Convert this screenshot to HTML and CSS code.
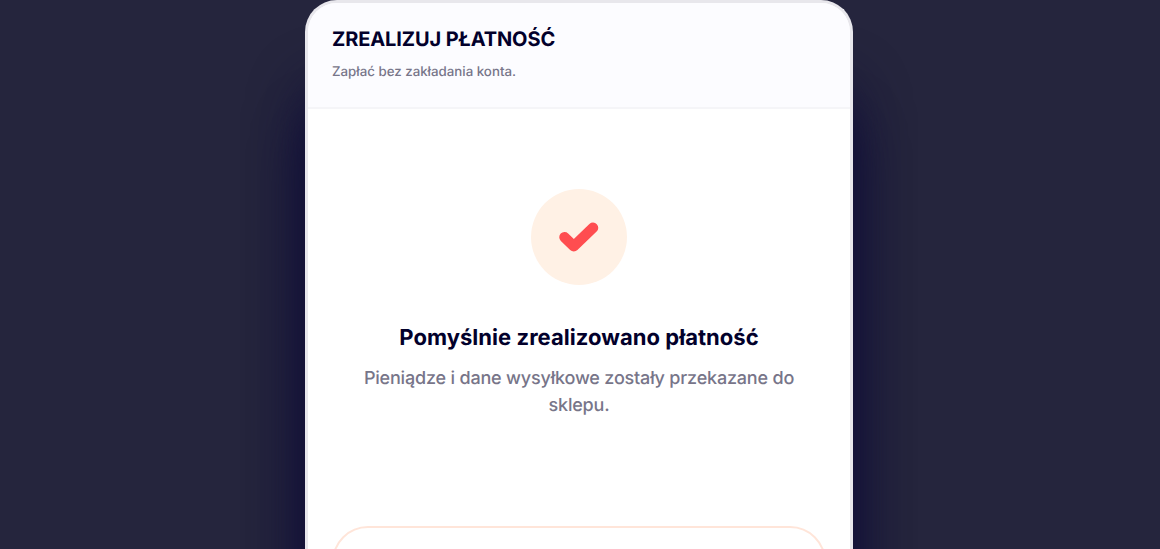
FILE: index.html
```html
<!DOCTYPE html>
<html lang="pl">
<head>
<meta charset="utf-8">
<title>Zrealizuj płatność</title>
<link rel="stylesheet" href="styles.css">
</head>
<body>
<main class="card">
<header class="card-header">
<h1 class="title">ZREALIZUJ PŁATNOŚĆ</h1>
<p class="subtitle">Zapłać bez zakładania konta.</p>
</header>
<section class="status">
<div class="badge">
<svg class="check" viewBox="0 0 40 32" width="40" height="32"><path d="M5.5 16.2 14.8 25.2 34 6.8" fill="none" stroke="#ff4d50" stroke-width="10.5" stroke-linecap="round" stroke-linejoin="round"/></svg>
</div>
<h2 class="status-title">Pomyślnie zrealizowano płatność</h2>
<p class="status-text">Pieniądze i dane wysyłkowe zostały przekazane do sklepu.</p>
</section>
<div class="action"></div>
</main>
</body>
</html>
```
FILE: styles.css
```css
* { box-sizing: border-box; margin: 0; padding: 0; }
html { overflow: hidden; }
body { background: #25253d; font-family: Inter, sans-serif; height: 549px; overflow: hidden; text-rendering: geometricPrecision; }
.card { width: 548px; height: 549px; margin-left: 305px; background: #fff; border: 3px solid #e8e7ec; border-bottom: 0; border-radius: 32px 32px 0 0; box-shadow: 0 84px 54px #110f38, 0 120px 50px #110f38; overflow: hidden; }
.card-header { height: 106px; padding: 23px 24px 0; background: #fcfcff; border-bottom: 2px solid #f5f5f8; }
.title { font-size: 20px; line-height: 26px; font-weight: 700; letter-spacing: -0.1px; color: #02002b; }
.subtitle { margin-top: 10px; font-size: 13.3px; line-height: 20px; font-weight: 450; color: #777589; }
.status { height: 415px; padding-top: 80px; display: flex; flex-direction: column; align-items: center; text-align: center; }
.badge { width: 96px; height: 96px; border-radius: 50%; background: #fff1e5; display: flex; align-items: center; justify-content: center; }
.status-title { margin-top: 37px; font-size: 22px; line-height: 32px; font-weight: 700; letter-spacing: 0.04px; color: #02002b; }
.status-text { width: 460px; margin-top: 11px; font-size: 18px; line-height: 27px; font-weight: 500; letter-spacing: -0.19px; color: #777589; }
.action { height: 72px; margin: 2px 24px 0; border: 2px solid #ffe5d9; border-radius: 36px; }
```
